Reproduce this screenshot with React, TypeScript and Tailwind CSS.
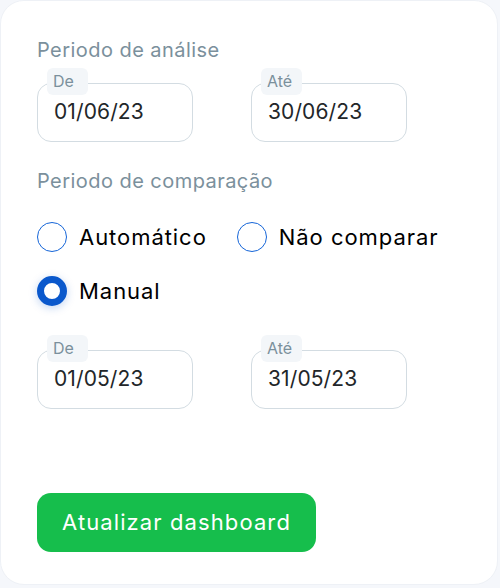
export default function App() {
  const font = { fontFamily: "Inter, 'Noto Sans', sans-serif" };

  const DateField = ({ label, value }: { label: string; value: string }) => (
    <div className="relative w-[156px] h-[59px] rounded-[14px] border-[1.5px] border-[#d3dce2] bg-white">
      <span className="absolute left-[9px] -top-[16px] min-w-[41px] pl-[6px] pr-[7px] h-[27px] rounded-[6px] bg-[#f3f6f9] text-[16px] leading-[27px] text-[#7b909c]">
        {label}
      </span>
      <div className="pl-[16px] pt-[17px] text-[21px] leading-[22px] tracking-[0.1px] text-[#222629]">{value}</div>
    </div>
  );

  const Radio = ({ checked, label }: { checked?: boolean; label: string }) => (
    <div className="flex items-center gap-[12px]">
      {checked ? (
        <span className="w-[30px] h-[30px] rounded-full border-[7px] border-[#0a58cc] bg-white shadow-[0_2px_8px_rgba(10,88,204,0.25)]" />
      ) : (
        <span className="w-[30px] h-[30px] rounded-full border-[1.5px] border-[#1565d8] bg-white" />
      )}
      <span className="text-[22px] leading-[26px] tracking-[0.95px] text-black">{label}</span>
    </div>
  );

  return (
    <div className="w-[500px] h-[588px] bg-[#f5f7fb]" style={font}>
      <div className="w-[498px] h-[585px] rounded-[24px] border border-[#eef1f6] bg-white pl-[36px] pt-[37px]">
        <p className="text-[20px] leading-[24px] tracking-[0.45px] text-[#7b909c]">Periodo de análise</p>
        <div className="flex gap-[58px] mt-[21px]">
          <DateField label="De" value="01/06/23" />
          <DateField label="Até" value="30/06/23" />
        </div>

        <p className="mt-[27px] text-[20px] leading-[24px] tracking-[0.45px] text-[#7b909c]">Periodo de comparação</p>
        <div className="flex gap-[30px] mt-[29px]">
          <Radio label="Automático" />
          <Radio label="Não comparar" />
        </div>
        <div className="mt-[24px]">
          <Radio checked label="Manual" />
        </div>
        <div className="flex gap-[58px] mt-[44px]">
          <DateField label="De" value="01/05/23" />
          <DateField label="Até" value="31/05/23" />
        </div>

        <button className="mt-[84px] w-[279px] h-[59px] rounded-[14px] bg-[#16be4c] text-[22px] tracking-[1.1px] text-white">
          Atualizar dashboard
        </button>
      </div>
    </div>
  );
}
